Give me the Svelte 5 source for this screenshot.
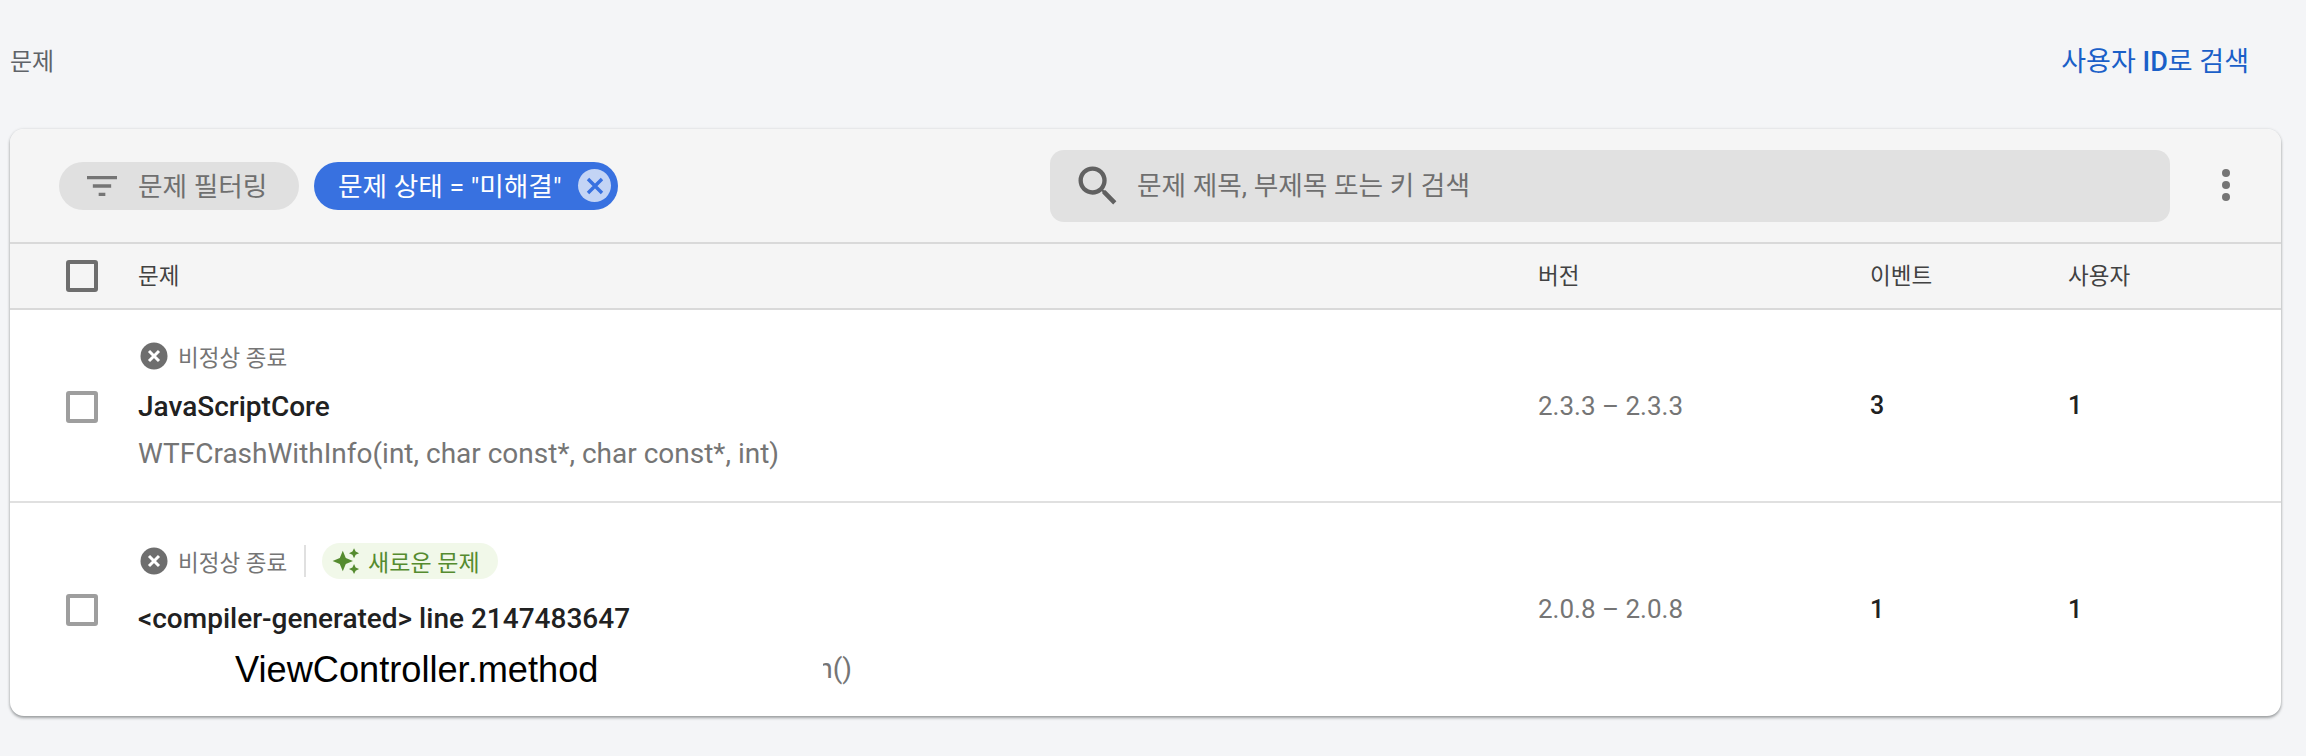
<script>
	let rows = [
		{ title: 'JavaScriptCore', versions: '2.3.3 – 2.3.3', events: 3, users: 1, isNew: false },
		{ title: '<compiler-generated> line 2147483647', versions: '2.0.8 – 2.0.8', events: 1, users: 1, isNew: true }
	];
</script>

<main class="page">
	<div class="top">
		<span class="page-title">문제</span>
		<span class="user-link">사용자 <b>ID</b>로 검색</span>
	</div>

	<section class="card">
		<div class="toolbar">
			<div class="filter-btn">
				<svg width="40" height="40" viewBox="0 0 24 24"><path fill="#757575" d="M3 6h18v2H3zM6.5 11h11v2h-11zM10 16h4v2h-4z" /></svg>
				<span class="bar-text">문제 필터링</span>
			</div>
			<div class="chip">
				<span class="bar-text">문제 상태 = "미해결"</span>
				<span class="chip-x">
					<svg width="22" height="22" viewBox="0 0 22 22"><path d="M4 4l14 14M18 4L4 18" stroke="#3871e0" stroke-width="3.4" /></svg>
				</span>
			</div>
			<div class="search">
				<svg width="52" height="52" viewBox="0 0 24 24"><path fill="#616161" d="M15.5 14h-.79l-.28-.27A6.47 6.47 0 0 0 16 9.5 6.5 6.5 0 1 0 9.5 16c1.61 0 3.09-.59 4.23-1.57l.27.28v.79l5 4.99L20.49 19l-4.99-5zm-6 0C7.01 14 5 11.99 5 9.5S7.01 5 9.5 5 14 7.01 14 9.5 11.99 14 9.5 14z" /></svg>
				<span class="search-text">문제 제목, 부제목 또는 키 검색</span>
			</div>
			<div class="more"><i></i><i></i><i></i></div>
		</div>

		<div class="grid head">
			<span class="box dark"></span>
			<span class="label">문제</span>
			<span class="label">버전</span>
			<span class="label">이벤트</span>
			<span class="label">사용자</span>
		</div>

		{#each rows as row}
			<div class="grid row" class:second={row.isNew}>
				<span class="box"></span>
				<div class="issue">
					<div class="meta">
						<svg width="28" height="28" viewBox="0 0 28 28">
							<circle cx="14" cy="14" r="13.5" fill="#6e6e6e" />
							<path d="M9 9l10 10M19 9L9 19" stroke="#fff" stroke-width="3" />
						</svg>
						<span class="meta-label">비정상 종료</span>
						{#if row.isNew}
							<span class="divider"></span>
							<span class="new-tag">
								<svg width="30" height="30" viewBox="0 0 28 28">
									<path fill="#558b2f" d="M11 4.5l2.8 6.7L20.5 14l-6.7 2.8L11 23.5l-2.8-6.7L1.5 14l6.7-2.8zM21.5 2l1.5 3.2 3.2 1.5L23 8.2 21.5 11.4 20 8.2l-3.2-1.5L20 5.2zM21.5 16.8l1.5 3.2 3.2 1.5-3.2 1.5-1.5 3.2-1.5-3.2-3.2-1.5 3.2-1.5z" />
								</svg>
								새로운 문제
							</span>
						{/if}
					</div>
					<div class="title">{row.title}</div>
					{#if row.isNew}
						<div class="sub redacted">
							<span class="masked">ViewController.method</span>
							<span class="tail"><span>n()</span></span>
						</div>
					{:else}
						<div class="sub">WTFCrashWithInfo(int, char const*, char const*, int)</div>
					{/if}
				</div>
				<span class="versions">{row.versions}</span>
				<span class="num">{row.events}</span>
				<span class="num">{row.users}</span>
			</div>
		{/each}
	</section>
</main>

<style>
	:global(body) {
		background: #f4f5f7;
		font-family: Roboto, "Noto Sans CJK KR", sans-serif;
	}

	.page {
		height: 756px;
		padding: 0 25px 0 10px;
		box-sizing: border-box;
		overflow: hidden;
	}

	.top {
		height: 129px;
		display: flex;
		justify-content: space-between;
		align-items: flex-start;
		padding: 46px 32px 0 0;
		box-sizing: border-box;
	}

	.page-title {
		font-size: 24px;
		line-height: 32px;
		color: #5f6368;
	}

	.user-link {
		font-size: 27px;
		line-height: 32px;
		color: #1a5fc8;
	}

	.user-link b {
		font-weight: 500;
	}

	.card {
		height: 587px;
		background: #fff;
		border-radius: 14px;
		box-shadow: 0 2px 3px rgba(60, 64, 67, 0.45), 0 0 3px rgba(60, 64, 67, 0.15);
		overflow: hidden;
	}

	.toolbar {
		height: 113px;
		display: flex;
		align-items: center;
		background: #f5f5f5;
		border-bottom: 2px solid #d9d9d9;
		padding-left: 49px;
	}

	.filter-btn {
		width: 240px;
		height: 48px;
		box-sizing: border-box;
		padding-left: 23px;
		display: flex;
		align-items: center;
		gap: 16px;
		border-radius: 24px;
		background: #e0e0e0;
		color: #6f6f6f;
		font-size: 26.7px;
	}

	.chip {
		margin-left: 15px;
		height: 48px;
		width: 304px;
		box-sizing: border-box;
		padding: 0 7px 0 24px;
		display: flex;
		align-items: center;
		justify-content: space-between;
		border-radius: 24px;
		background: #3871e0;
		color: #fff;
		font-size: 26.7px;
		white-space: nowrap;
	}

	.bar-text {
		margin-bottom: 2px;
	}

	.chip-x {
		width: 33px;
		height: 33px;
		border-radius: 50%;
		background: #c3d4f5;
		display: flex;
		align-items: center;
		justify-content: center;
	}

	.search {
		margin-left: 432px;
		width: 1120px;
		height: 72px;
		box-sizing: border-box;
		padding-left: 22px;
		display: flex;
		align-items: center;
		gap: 13px;
		border-radius: 14px;
		background: #e1e1e1;
		color: #6f6f6f;
		font-size: 26.7px;
	}

	.search-text {
		margin-bottom: 4px;
	}

	.more {
		margin-left: 52px;
		margin-top: -2px;
		display: flex;
		flex-direction: column;
		gap: 4px;
	}

	.more i {
		width: 8px;
		height: 8px;
		border-radius: 50%;
		background: #757575;
	}

	.grid {
		display: grid;
		grid-template-columns: 128px 1400px 332px 198px 1fr;
		align-items: center;
	}

	.head {
		height: 64px;
		background: #f5f5f5;
		border-bottom: 2px solid #d9d9d9;
		color: #424242;
		font-size: 22.5px;
	}

	.label {
		margin-bottom: 5px;
	}

	.row {
		height: 191px;
		border-bottom: 2px solid #e0e0e0;
	}

	.row.second {
		height: 212px;
		border-bottom: none;
	}

	.box {
		margin-left: 56px;
		width: 32px;
		height: 32px;
		box-sizing: border-box;
		border: 4px solid #9e9e9e;
		border-radius: 3px;
	}

	.box.dark {
		border-color: #6e6e6e;
	}

	.row .box {
		margin-top: 2px;
	}

	.issue {
		margin-bottom: 3px;
	}

	.second .issue {
		margin-bottom: 0;
		padding-top: 10px;
	}

	.meta {
		display: flex;
		align-items: center;
		height: 36px;
		padding-left: 2px;
	}

	.meta-label {
		margin-left: 10px;
		font-size: 22.5px;
		color: #757575;
	}

	.divider {
		width: 2px;
		height: 32px;
		margin: 0 16px 0 17px;
		background: #e0e0e0;
	}

	.new-tag {
		height: 36px;
		padding: 0 18px 0 9px;
		display: flex;
		align-items: center;
		gap: 7px;
		border-radius: 18px;
		background: #f1f8e9;
		color: #558b2f;
		font-size: 23px;
	}

	.title {
		margin-top: 17px;
		font-size: 28px;
		line-height: 32px;
		font-weight: 500;
		color: #212121;
	}

	.second .title {
		margin-top: 24px;
	}

	.sub {
		margin-top: 15px;
		font-size: 28px;
		line-height: 32px;
		color: #757575;
	}

	.redacted {
		position: relative;
		height: 32px;
		margin-top: 18px;
	}

	.masked {
		position: absolute;
		left: 97px;
		top: -3px;
		font-family: "Liberation Sans", sans-serif;
		font-size: 36.2px;
		line-height: 40px;
		color: #000;
		white-space: nowrap;
	}

	.tail {
		position: absolute;
		left: 685px;
		width: 29px;
		display: flex;
		justify-content: flex-end;
		overflow: hidden;
		white-space: nowrap;
	}

	.versions {
		font-size: 26px;
		color: #757575;
	}

	.num {
		font-size: 25px;
		font-weight: 500;
		color: #212121;
	}
</style>
